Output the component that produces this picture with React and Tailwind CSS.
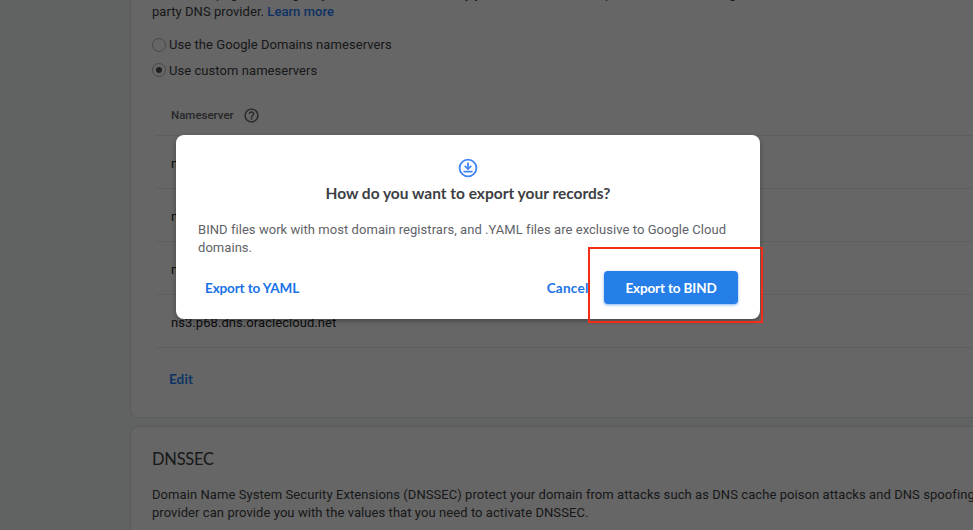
const servers = [
  "ns1.p68.dns.oraclecloud.net",
  "ns4.p68.dns.oraclecloud.net",
  "ns2.p68.dns.oraclecloud.net",
  "ns3.p68.dns.oraclecloud.net",
];

function Radio({ checked, label }) {
  return (
    <div className="flex h-[25.5px] items-center">
      <span className="flex size-[14px] items-center justify-center rounded-full border border-[#b4b4b4]">
        {checked && <span className="size-1.5 rounded-full bg-[#505050]" />}
      </span>
      <span className="ml-[3px] text-[13px] tracking-[0.06px] text-[#3c4043]">{label}</span>
    </div>
  );
}

function HelpIcon() {
  return (
    <svg className="ml-[9px] size-[17px]" viewBox="0 0 24 24" fill="#5f6368">
      <path d="M11 18h2v-2h-2v2zm1-16C6.48 2 2 6.48 2 12s4.48 10 10 10 10-4.48 10-10S17.52 2 12 2zm0 18c-4.41 0-8-3.59-8-8s3.59-8 8-8 8 3.59 8 8-3.59 8-8 8zm0-14c-2.21 0-4 1.79-4 4h2c0-1.1.9-2 2-2s2 .9 2 2c0 2-3 1.75-3 5h2c0-2.25 3-2.5 3-5 0-2.21-1.79-4-4-4z" />
    </svg>
  );
}

function DownloadIcon() {
  return (
    <svg className="size-5" viewBox="0 0 20 20" fill="none" stroke="#4285f4" strokeWidth="1.8">
      <circle cx="10" cy="10" r="8.4" />
      <path d="M10 4.6v5.4M5.5 13.7h9" />
      <path d="M6.7 7.9 10 11.1l3.3-3.2" strokeWidth="1.7" />
    </svg>
  );
}

function Dialog() {
  return (
    <div className="absolute left-[176px] top-[135px] flex h-[184px] w-[584px] flex-col rounded-lg bg-white px-[22px] pt-[23px] shadow-[0_2px_5px_rgba(0,0,0,0.3)]">
      <div className="flex justify-center"><DownloadIcon /></div>
      <h2 className="mt-[5px] text-center font-[Lato,sans-serif] text-[15.5px] font-bold leading-[21px] text-[#3c4043]">
        <span className="whitespace-nowrap">How do you want to export your records?</span>
      </h2>
      <p className="mt-[17px] whitespace-nowrap text-[13px] leading-[18px] tracking-[0.05px] text-[#5f6368]">
        BIND files work with most domain registrars, and .YAML files are exclusive to Google Cloud
        <br />
        domains.
      </p>
      <div className="mt-[14px] flex h-[33px] items-center font-[Lato,sans-serif] text-[13.5px] font-bold text-[#1a73e8]">
        <button className="ml-[7px] whitespace-nowrap pt-px tracking-[-0.13px]">Export to YAML</button>
        <button className="ml-auto mr-[15.5px] pt-px tracking-[0.25px]">Cancel</button>
        <button className="h-[33px] w-[134px] whitespace-nowrap rounded bg-[#267fe9] pt-px tracking-[-0.15px] text-white shadow-[0_1px_3px_rgba(26,115,232,0.55)]">
          Export to BIND
        </button>
      </div>
    </div>
  );
}

export default function App() {
  return (
    <div className="relative h-[530px] w-[973px] overflow-hidden bg-[#f2f7f4] font-[Roboto,sans-serif] text-[13px] text-[#3c4043]">
      <main className="ml-[130px] flex h-[530px] flex-col">
        <section className="h-[418px] shrink-0 overflow-hidden rounded-bl-lg border-b border-l border-[#e2e7e5] bg-white">
          <div className="-mt-[15px] ml-[21px] whitespace-nowrap leading-[18px] tracking-[0.05px]">
            <p>Select this page to configure your domain records, only you can set the rules up here to use the Google Domains nameservers or a third-</p>
            <p>
              party DNS provider. <a className="font-medium text-[#1f7cf5]">Learn more</a>
            </p>
          </div>
          <div className="ml-[21px] mt-[11px]">
            <Radio label="Use the Google Domains nameservers" />
            <Radio checked label="Use custom nameservers" />
          </div>
          <div className="ml-[24px] mt-[12px]">
            <div className="flex h-[41px] items-center border-b border-[#e9eaec] pl-4 text-[11.5px] font-medium text-[#5f6368]">
              <span className="pt-px">Nameserver</span>
              <HelpIcon />
            </div>
            {servers.map((name) => (
              <div key={name} className="flex h-[53px] items-center border-b border-[#e9eaec] pl-4 pt-1 tracking-[0.06px] text-[#202124]">
                {name}
              </div>
            ))}
          </div>
          <a className="ml-[38px] mt-[22px] block font-[Lato,sans-serif] text-[13.5px] font-bold leading-[18px] tracking-[0.1px] text-[#1f84ff]">Edit</a>
        </section>
        <section className="mt-2 h-[120px] shrink-0 rounded-tl-lg border-l border-t border-[#e2e7e5] bg-white pl-[21px] pt-[20px]">
          <h2 className="font-[Lato,sans-serif] text-[16.5px] leading-[24px] tracking-[-0.25px]">DNSSEC</h2>
          <p className="mt-[15px] whitespace-nowrap leading-[18px] tracking-[0.07px]">
            Domain Name System Security Extensions (DNSSEC) protect your domain from attacks such as DNS cache poison attacks and DNS spoofing. Your
            <br />
            provider can provide you with the values that you need to activate DNSSEC.
          </p>
        </section>
      </main>
      <div className="absolute inset-0 bg-black/60" />
      <Dialog />
      <div className="absolute left-[588px] top-[247px] h-[76px] w-[175px] border-2 border-[#f62c16]" />
    </div>
  );
}
